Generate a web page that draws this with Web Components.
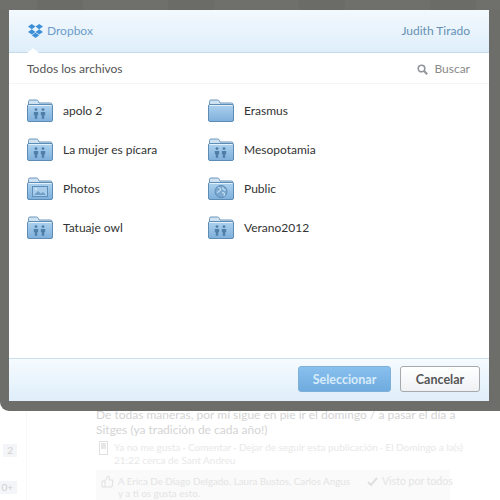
<!DOCTYPE html>
<html lang="es">
<head>
<meta charset="utf-8">
<title>Dropbox</title>
<style>
html,body{margin:0;padding:0;background:#fff}
body{width:500px;height:500px;overflow:hidden;font-family:Lato,"Open Sans",sans-serif}
</style>
</head>
<body>
<picker-page>
  <feed-post>
    <span slot="body">De todas maneras, por mí sigue en pie ir el domingo / a pasar el día a<br>Sitges (ya tradición de cada año!)</span>
    <span slot="meta">Ya no me gusta · Comentar · Dejar de seguir esta publicación · El Domingo a la(s)<br>21:22 cerca de Sant Andreu</span>
    <span slot="likes">A Erica De Diago Delgado, Laura Bustos, Carlos Angus<br>y a ti os gusta esto.</span>
    <span slot="seen">Visto por todos</span>
  </feed-post>
  <dropbox-dialog slot="overlay" user="Judith Tirado">
    <folder-item type="shared" name="apolo 2"></folder-item>
    <folder-item type="plain" name="Erasmus"></folder-item>
    <folder-item type="shared" name="La mujer es pícara"></folder-item>
    <folder-item type="shared" name="Mesopotamia"></folder-item>
    <folder-item type="photos" name="Photos"></folder-item>
    <folder-item type="public" name="Public"></folder-item>
    <folder-item type="shared" name="Tatuaje owl"></folder-item>
    <folder-item type="shared" name="Verano2012"></folder-item>
  </dropbox-dialog>
</picker-page>
<script>
class PickerPage extends HTMLElement{
  constructor(){super();this.attachShadow({mode:'open'}).innerHTML=`
  <style>
  :host{display:block;position:relative;width:500px;height:500px;overflow:hidden;background:#fff}
  </style>
  <slot></slot><slot name="overlay"></slot>`;}
}
class FeedPost extends HTMLElement{
  constructor(){super();this.attachShadow({mode:'open'}).innerHTML=`
  <style>
  :host{display:grid;grid-template-columns:27px 1fr;height:500px;box-sizing:border-box;padding-top:407px;color:#d8d8d8;font:12px/14px Lato,sans-serif}
  .rail{border-right:1px solid #f7f7f7;display:flex;flex-direction:column;align-items:flex-end;gap:24px;padding:37px 9px 0 0}
  .rail b{font-weight:400;font-size:10px;line-height:13px;background:#f4f5f8;padding:0 4px;color:#cfcfcf}
  .main{padding:0 0 0 69px;min-width:0}
  .body{font-size:12px;line-height:15px;color:#d4d4d4;white-space:nowrap}
  .meta{display:flex;gap:6px;margin-top:4px;color:#e8e8e8;font-size:10px;line-height:13px;white-space:nowrap;margin-left:3px}
  .meta svg{flex:none;width:9px;height:14px}
  .likes{display:flex;align-items:flex-start;margin-top:3px;padding:5px 0 0 5px;background:#fafafa;height:40px;width:354px;box-sizing:border-box;color:#e4e4e4;font-size:9.8px;line-height:12px;white-space:nowrap}
  .likes svg{flex:none;width:13px;height:13px}
  .lk{width:245px;flex:none;margin-left:4px}
  .seen{display:flex;gap:4px;margin-left:4px;align-items:flex-start;font-size:10.5px}
  .seen svg{width:11px;height:11px;flex:none;margin-top:1px}
  </style>
  <div class="rail"><b>2</b><b>0+</b></div>
  <div class="main">
    <div class="body"><slot name="body"></slot></div>
    <div class="meta">
      <svg viewBox="0 0 9 14"><rect x=".5" y=".5" width="8" height="13" fill="none" stroke="#e0e0e0"/><rect x="2" y="2" width="5" height="6" fill="#e6e6e6"/></svg>
      <div><slot name="meta"></slot></div>
    </div>
    <div class="likes">
      <svg viewBox="0 0 13 13"><path d="M1 6h3v6H1zM4 6l3-5c1 0 2 1 1 4h4l-1 7H4" fill="none" stroke="#e0e0e0"/></svg>
      <div class="lk"><slot name="likes"></slot></div>
      <div class="seen"><svg viewBox="0 0 11 11"><path d="M1 6l3 3 6-7" fill="none" stroke="#e0e0e0" stroke-width="2"/></svg><slot name="seen"></slot></div>
    </div>
  </div>`;}
}
class DropboxDialog extends HTMLElement{
  constructor(){super();this.attachShadow({mode:'open'}).innerHTML=`
  <style>
  :host{position:absolute;left:0;top:0;width:500px;height:411px;box-sizing:border-box;padding:10px 11px 10px 9px;display:block;
    background:
      repeating-linear-gradient(90deg,rgba(255,255,255,.012) 0 37px,rgba(0,0,0,.015) 37px 83px,rgba(255,255,255,.01) 83px 131px) top/100% 10px no-repeat,
      #6d6d6a;
    border-radius:0 0 0 9px;font:12px/16px Lato,sans-serif;color:#333}
  .box{display:flex;flex-direction:column;height:100%;background:#fff}
  header{flex:none;height:43px;box-sizing:border-box;display:flex;align-items:center;justify-content:space-between;padding:0 19px;position:relative;
    background:linear-gradient(#f3f9fe,#dfeefa);border-bottom:1px solid #c3dbea}
  .brand{display:flex;align-items:center;gap:4px;color:#6d9ccb}
  .brand svg{width:15px;height:14px}
  .user{color:#6590b4}
  .notch{position:absolute;left:18px;bottom:-1px;width:0;height:0;border:6px solid transparent;border-top:0;border-bottom:5px solid #fff}
  .bar{flex:none;height:31px;box-sizing:border-box;display:flex;align-items:center;justify-content:space-between;padding:2px 19px 0 18px;border-bottom:1px solid #f5f5f5;color:#555}
  .search{display:flex;align-items:center;gap:6px;color:#8a8a8a}
  .search svg{width:11px;height:11px}
  main{flex:1;min-height:0;display:grid;grid-template-columns:181px 181px;grid-auto-rows:39px;align-content:start;padding:7px 0 0 18px}
  footer{flex:none;height:43px;box-sizing:border-box;display:flex;justify-content:flex-end;align-items:center;gap:9px;padding:0 9px 2px 0;
    border-top:1px solid #c9dfec;background:linear-gradient(#f6fbff,#dfeefa)}
  button{font:700 12.5px Lato,sans-serif;height:26px;box-sizing:border-box;border-radius:3px;padding:0}
  .ok{width:93px;background:linear-gradient(#88c0ee,#6fabdf);border:1px solid #7fb0d6;color:#d8ecfa}
  .no{width:80px;background:linear-gradient(#fff,#eff1f3);border:1px solid #a6a9ab;color:#555}
  </style>
  <div class="box">
    <header>
      <div class="brand">
        <svg viewBox="0 0 15 14"><path fill="#3d8fd6" d="M3.8 0 0 2.6l3.8 2.7 3.7-2.7zM11.2 0 7.5 2.6l3.7 2.7L15 2.6zM0 7.9l3.8 2.7 3.7-2.7-3.7-2.6zM11.2 5.3 7.5 7.9l3.7 2.7L15 7.9zM7.5 8.7l-3.7 2.6L7.5 14l3.7-2.7z"/></svg>
        <span>Dropbox</span>
      </div>
      <span class="user"></span>
      <i class="notch"></i>
    </header>
    <div class="bar">
      <span>Todos los archivos</span>
      <span class="search"><svg viewBox="0 0 11 11"><circle cx="4.5" cy="4.5" r="3.3" fill="none" stroke="#8f9499" stroke-width="1.6"/><path d="M7 7l3.2 3.2" stroke="#8f9499" stroke-width="2"/></svg>Buscar</span>
    </div>
    <main><slot></slot></main>
    <footer>
      <button class="ok">Seleccionar</button>
      <button class="no">Cancelar</button>
    </footer>
  </div>`;}
  connectedCallback(){this.shadowRoot.querySelector('.user').textContent=this.getAttribute('user');}
}
const person=(x)=>`<circle cx="${x}" cy="10.6" r="1.4" fill="#4f7ea8"/><path d="M${x-2.2} 13h4.4v3.2h-1v3.6h-2.4v-3.6h-1z" fill="#4f7ea8"/>`;
const glyphs={
  plain:'',
  shared:person(9)+person(16),
  photos:'<rect x="5.5" y="9.5" width="15" height="10" fill="#a9cdea" stroke="#5e8fb8"/><path d="M7 18l4-4 3 2.5 2-1.5 3 3z" fill="#6f9fc6"/><circle cx="9" cy="12" r="1" fill="#dcecf8"/>',
  public:'<circle cx="13" cy="14.5" r="6" fill="#7aa8cf" stroke="#5d8cb5"/><path d="M10 10.5c2 .5 3 1 2.5 2.5s-3 1-3 3M15 10c-1 2 1 3 3 3M14 16c2-1 3 0 2 3" fill="none" stroke="#c4dff3" stroke-width="1.2"/>'
};
class FolderItem extends HTMLElement{
  constructor(){super();this.attachShadow({mode:'open'});}
  connectedCallback(){
    const t=this.getAttribute('type');
    this.shadowRoot.innerHTML=`
    <style>
    :host{display:flex;align-items:center;gap:10px;font:12px/16px Lato,sans-serif;color:#333}
    svg{width:26px;height:23px;flex:none}
    </style>
    <svg viewBox="0 0 26 23">
      <defs><linearGradient id="g" x1="0" y1="0" x2="0" y2="1"><stop offset="0" stop-color="#add2ee"/><stop offset="1" stop-color="#7eafdb"/></linearGradient></defs>
      <path d="M1.5 5V2.5Q1.5 1 3 1h6.5Q11 1 11.5 2.5l.5 1.5h11.5Q25 4 25 5.5V6H1.5z" fill="#cfe2f2" stroke="#6c97bc"/>
      <rect x=".5" y="5.5" width="25" height="17" rx="1.5" fill="url(#g)" stroke="#5d8cb5"/>
      <path d="M1.5 6.5h23" stroke="#e2f1fc"/>
      ${glyphs[t]||''}
    </svg>
    <span>${this.getAttribute('name')}</span>`;
  }
}
customElements.define('picker-page',PickerPage);
customElements.define('feed-post',FeedPost);
customElements.define('dropbox-dialog',DropboxDialog);
customElements.define('folder-item',FolderItem);
</script>
</body>
</html>
